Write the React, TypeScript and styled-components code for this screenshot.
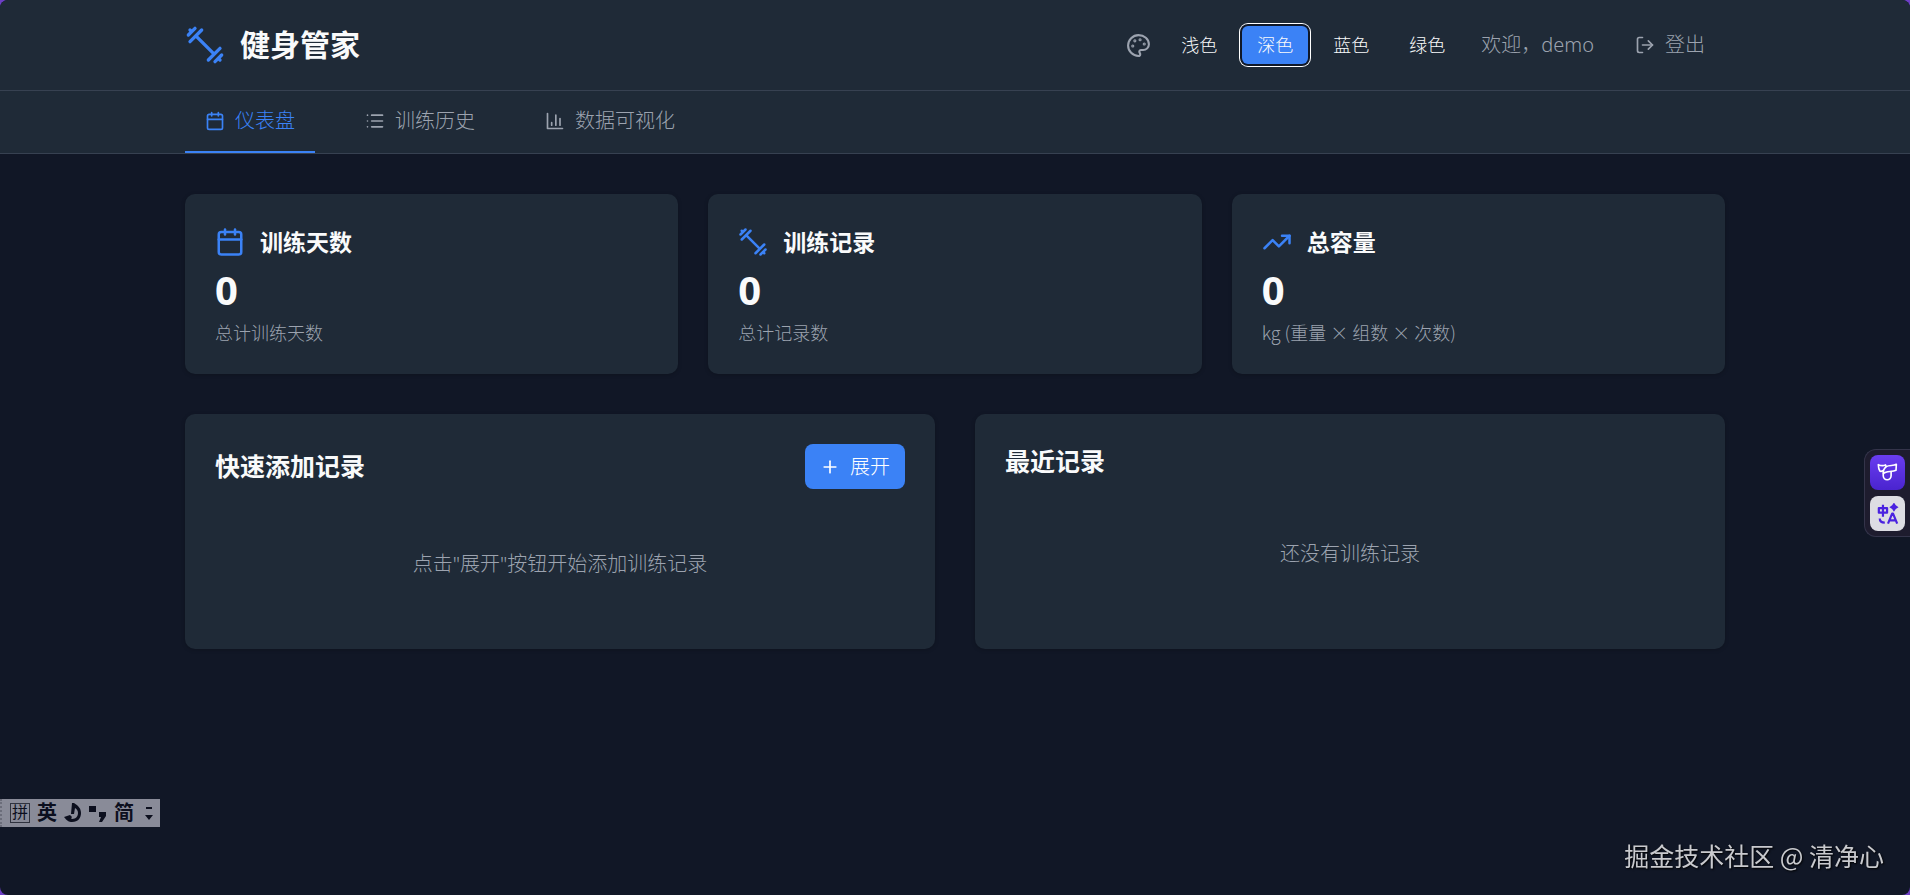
import React, { useState } from "react";
import styled, { createGlobalStyle, ThemeProvider } from "styled-components";
import { Calendar, List, LogOut, Plus, TrendingUp } from "lucide-react";

const theme = {
  page: "#111726",
  surface: "#1f2a37",
  line: "#374151",
  text: "#f9fafb",
  muted: "#9ca3af",
  accent: "#3b82f6",
};

const GlobalStyle = createGlobalStyle`
  *, *::before, *::after { box-sizing: border-box; }
  html { background: #6d3fc4; }
  body {
    margin: 0;
    font-family: "Noto Sans", "Noto Sans CJK SC", sans-serif;
    font-size: 20px;
    font-weight: 300;
    line-height: 30px;
    color: #f9fafb;
  }
  h1, h2, h3, p { margin: 0; }
  button { font: inherit; cursor: pointer; }
  svg { display: block; flex: none; }
`;

const Page = styled.div`
  min-height: 100vh;
  background: ${(p) => p.theme.page};
  border-radius: 8px;
  overflow: hidden;
`;

const Container = styled.div`
  max-width: 1600px;
  margin: 0 auto;
  padding: 0 30px;
`;

const Header = styled.header`
  background: ${(p) => p.theme.surface};
  border-bottom: 1px solid ${(p) => p.theme.line};
`;

const HeaderRow = styled(Container)`
  display: flex;
  align-items: center;
  justify-content: space-between;
  padding-top: 20px;
  padding-bottom: 20px;
`;

const Brand = styled.div`
  display: flex;
  align-items: center;
  gap: 15px;
  color: ${(p) => p.theme.accent};
`;

const BrandName = styled.h1`
  font-size: 30px;
  line-height: 44px;
  font-weight: 700;
  color: ${(p) => p.theme.text};
`;

const HeaderActions = styled.div`
  display: flex;
  align-items: center;
  gap: 21px;
  color: ${(p) => p.theme.muted};
`;

const ThemeSwitch = styled.div`
  display: flex;
  align-items: center;
  gap: 15px;
`;

const ThemeOptions = styled.div`
  display: flex;
  gap: 10px;
`;

const ThemeButton = styled.button<{ $active: boolean }>`
  padding: 6px 15px;
  border: 0;
  border-radius: 6px;
  background: ${(p) => (p.$active ? p.theme.accent : "transparent")};
  color: ${(p) => p.theme.text};
  font-size: 18px;
  line-height: 26px;
  box-shadow: ${(p) => (p.$active ? "0 0 0 2px #101828, 0 0 0 3px #ffffff" : "none")};
`;

const LogoutButton = styled.button`
  display: flex;
  align-items: center;
  gap: 10px;
  padding: 10px 20px;
  border: 0;
  background: transparent;
  color: inherit;
`;

const Nav = styled.nav`
  background: ${(p) => p.theme.surface};
  border-bottom: 1px solid ${(p) => p.theme.line};
`;

const TabRow = styled(Container)`
  display: flex;
  gap: 30px;
`;

const Tab = styled.button<{ $active: boolean }>`
  display: flex;
  align-items: center;
  gap: 10px;
  padding: 15px 20px;
  border: 0;
  border-bottom: 2px solid ${(p) => (p.$active ? p.theme.accent : "transparent")};
  background: transparent;
  color: ${(p) => (p.$active ? p.theme.accent : p.theme.muted)};
`;

const Main = styled(Container).attrs({ as: "main" })`
  display: grid;
  gap: 40px;
  padding-top: 40px;
  padding-bottom: 40px;
`;

const StatGrid = styled.section`
  display: grid;
  grid-template-columns: repeat(3, 1fr);
  gap: 30px;
`;

const PanelGrid = styled.section`
  display: grid;
  grid-template-columns: repeat(2, 1fr);
  gap: 40px;
`;

const Card = styled.article`
  padding: 30px;
  border-radius: 10px;
  background: ${(p) => p.theme.surface};
  box-shadow: 0 1px 4px rgba(0, 0, 0, 0.2);
`;

const StatHead = styled.div`
  display: flex;
  align-items: center;
  gap: 15px;
  color: ${(p) => p.theme.accent};
`;

const StatTitle = styled.h3`
  font-size: 23px;
  line-height: 36px;
  font-weight: 700;
  color: ${(p) => p.theme.text};
`;

const StatValue = styled.p`
  font-size: 40px;
  line-height: 60px;
  font-weight: 700;
`;

const StatCaption = styled.p`
  font-family: "Noto Sans CJK SC", sans-serif;
  font-size: 18px;
  line-height: 24px;
  color: ${(p) => p.theme.muted};
`;

const PanelHead = styled.div`
  display: flex;
  align-items: center;
  justify-content: space-between;
  margin-bottom: 20px;
`;

const PanelTitle = styled.h2`
  font-size: 25px;
  line-height: 35px;
  font-weight: 700;
`;

const ExpandButton = styled.button`
  display: flex;
  align-items: center;
  gap: 10px;
  height: 45px;
  padding: 0 15px;
  border: 0;
  border-radius: 8px;
  background: ${(p) => p.theme.accent};
  color: #ffffff;
`;

const EmptyState = styled.p`
  padding: 40px;
  text-align: center;
  color: ${(p) => p.theme.muted};
`;

const SideTools = styled.aside`
  position: fixed;
  top: 449px;
  right: 0;
  display: grid;
  gap: 6px;
  padding: 5px;
  border: 1px solid #34344a;
  border-right: 0;
  border-radius: 12px 0 0 12px;
  background: #1e1c2e;
`;

const ToolButton = styled.button<{ $light?: boolean }>`
  display: grid;
  place-items: center;
  width: 35px;
  height: 35px;
  padding: 0;
  border: 0;
  border-radius: 8px;
  background: ${(p) => (p.$light ? "#dddde3" : "linear-gradient(#6a3df0, #4a24cf)")};
  color: ${(p) => (p.$light ? "#4a22e0" : "#ffffff")};
`;

const ImeBar = styled.div`
  position: fixed;
  left: 0;
  bottom: 68px;
  display: flex;
  align-items: center;
  gap: 7px;
  width: 160px;
  height: 28px;
  padding: 0 7px 0 8px;
  background: #898b98;
  border-left: 2px dotted #6b6d7a;
  color: #0c0f1e;
`;

const ImeMode = styled.span`
  width: 20px;
  height: 20px;
  border: 1px solid #30333f;
  font-size: 16px;
  font-weight: 400;
  line-height: 17px;
  text-align: center;
`;

const ImeGlyph = styled.span`
  font-size: 20px;
  line-height: 28px;
  font-weight: 700;
`;

const ImeMenu = styled.span`
  margin-left: auto;
`;

const Watermark = styled.div`
  position: fixed;
  right: 26px;
  bottom: 22px;
  font-family: "Noto Sans CJK SC", sans-serif;
  font-size: 25px;
  font-weight: 400;
  line-height: 36px;
  color: #c9cace;
  text-shadow: 1px 1px 2px #000000;
`;

const stroke = {
  viewBox: "0 0 24 24",
  fill: "none",
  stroke: "currentColor",
  strokeWidth: 2,
  strokeLinecap: "round" as const,
  strokeLinejoin: "round" as const,
  "aria-hidden": true,
};

type IconProps = { size: number };

const DumbbellIcon = ({ size }: IconProps) => (
  <svg {...stroke} width={size} height={size}>
    <path d="m6.5 6.5 11 11M21 21l-1-1M3 3l1 1M18 22l4-4M2 6l4-4M3 10l7-7M14 21l7-7" />
  </svg>
);

const PaletteIcon = ({ size }: IconProps) => (
  <svg {...stroke} width={size} height={size}>
    <circle cx="13.5" cy="6.5" r=".5" fill="currentColor" />
    <circle cx="17.5" cy="10.5" r=".5" fill="currentColor" />
    <circle cx="8.5" cy="7.5" r=".5" fill="currentColor" />
    <circle cx="6.5" cy="12.5" r=".5" fill="currentColor" />
    <path d="M12 2C6.5 2 2 6.5 2 12s4.5 10 10 10c.926 0 1.648-.746 1.648-1.688 0-.437-.18-.835-.437-1.125-.29-.289-.438-.652-.438-1.125a1.64 1.64 0 0 1 1.668-1.668h1.996c3.051 0 5.555-2.503 5.555-5.554C21.965 6.012 17.461 2 12 2z" />
  </svg>
);

const BarsIcon = ({ size }: IconProps) => (
  <svg {...stroke} width={size} height={size}>
    <path d="M3 3v18h18M18 17V9M13 17V5M8 17v-3" />
  </svg>
);

const AssistantIcon = () => (
  <svg {...stroke} viewBox="0 0 62 58" width={21} height={19} strokeWidth={5}>
    <path d="M27 11 25 6C18 9 10 8 3 5c0 8 2 15 5 20 4 1 7 0 10-2" />
    <path d="M58 4C48 10 38 5 27 11c-7 6-10 12-8 21 8-8 26-4 38-10z" />
    <path d="M18 30v9a12 12 0 0 0 24 0V26" />
  </svg>
);

const TranslateIcon = () => (
  <svg {...stroke} width={22} height={22} strokeWidth={2.4} strokeLinecap="butt">
    <path d="M2 5.5h9v5H2zM6.5 2v13M3 17c0 3 1.500 4.500 5.500 4.500M12 22.500l4.500-11h1l4.500 11M13.500 19h7" />
    <path fill="currentColor" stroke="none" d="M18.500-.5l2 3 3 2-3 2-2 3-2-3-3-2 3-2z" />
  </svg>
);

const MoonIcon = () => (
  <svg width="18" height="20" viewBox="0 0 18 20" fill="currentColor" aria-hidden="true">
    <path d="M8 0h2c5 3 7 6 7 10 0 5-3 9-9 9-3 0-5-1-8-5l6-2 2 2c-1 1-1 2 0 2 4 0 6-3 6-6 0-2-1-4-3-5l-1 6H7z" />
  </svg>
);

const PunctuationIcon = () => (
  <svg width="18" height="18" viewBox="0 0 18 18" fill="currentColor" aria-hidden="true">
    <path d="M0 2h7v6H0zM10 8h7v4l-4 6h-3l2-5h-2z" />
  </svg>
);

const MenuArrowIcon = () => (
  <svg width="8" height="16" viewBox="0 0 8 16" fill="currentColor" aria-hidden="true">
    <path d="M1 2h6v2H1zM0 10h8l-4 5z" />
  </svg>
);

const themeNames = ["浅色", "深色", "蓝色", "绿色"];

const tabs = [
  { label: "仪表盘", icon: <Calendar size={20} /> },
  { label: "训练历史", icon: <List size={20} /> },
  { label: "数据可视化", icon: <BarsIcon size={20} /> },
];

const stats = [
  { title: "训练天数", value: 0, caption: "总计训练天数", icon: <Calendar size={30} /> },
  { title: "训练记录", value: 0, caption: "总计记录数", icon: <DumbbellIcon size={30} /> },
  { title: "总容量", value: 0, caption: "kg (重量 × 组数 × 次数)", icon: <TrendingUp size={30} /> },
];

export default function App() {
  const [activeTheme, setActiveTheme] = useState("深色");
  const [activeTab, setActiveTab] = useState("仪表盘");

  return (
    <ThemeProvider theme={theme}>
      <GlobalStyle />
      <Page>
        <Header>
          <HeaderRow>
            <Brand>
              <DumbbellIcon size={40} />
              <BrandName>健身管家</BrandName>
            </Brand>
            <HeaderActions>
              <ThemeSwitch>
                <PaletteIcon size={25} />
                <ThemeOptions>
                  {themeNames.map((name) => (
                    <ThemeButton key={name} $active={name === activeTheme} onClick={() => setActiveTheme(name)}>
                      {name}
                    </ThemeButton>
                  ))}
                </ThemeOptions>
              </ThemeSwitch>
              <span>欢迎，demo</span>
              <LogoutButton>
                <LogOut size={20} />
                登出
              </LogoutButton>
            </HeaderActions>
          </HeaderRow>
        </Header>
        <Nav>
          <TabRow>
            {tabs.map((tab) => (
              <Tab key={tab.label} $active={tab.label === activeTab} onClick={() => setActiveTab(tab.label)}>
                {tab.icon}
                {tab.label}
              </Tab>
            ))}
          </TabRow>
        </Nav>
        <Main>
          <StatGrid>
            {stats.map((stat) => (
              <Card key={stat.title}>
                <StatHead>
                  {stat.icon}
                  <StatTitle>{stat.title}</StatTitle>
                </StatHead>
                <StatValue>{stat.value}</StatValue>
                <StatCaption>{stat.caption}</StatCaption>
              </Card>
            ))}
          </StatGrid>
          <PanelGrid>
            <Card>
              <PanelHead>
                <PanelTitle>快速添加记录</PanelTitle>
                <ExpandButton>
                  <Plus size={20} />
                  展开
                </ExpandButton>
              </PanelHead>
              <EmptyState>点击"展开"按钮开始添加训练记录</EmptyState>
            </Card>
            <Card>
              <PanelHead>
                <PanelTitle>最近记录</PanelTitle>
              </PanelHead>
              <EmptyState>还没有训练记录</EmptyState>
            </Card>
          </PanelGrid>
        </Main>
      </Page>
      <SideTools>
        <ToolButton aria-label="助手">
          <AssistantIcon />
        </ToolButton>
        <ToolButton $light aria-label="翻译">
          <TranslateIcon />
        </ToolButton>
      </SideTools>
      <ImeBar>
        <ImeMode>拼</ImeMode>
        <ImeGlyph>英</ImeGlyph>
        <MoonIcon />
        <PunctuationIcon />
        <ImeGlyph>简</ImeGlyph>
        <ImeMenu>
          <MenuArrowIcon />
        </ImeMenu>
      </ImeBar>
      <Watermark>掘金技术社区 @ 清净心</Watermark>
    </ThemeProvider>
  );
}
